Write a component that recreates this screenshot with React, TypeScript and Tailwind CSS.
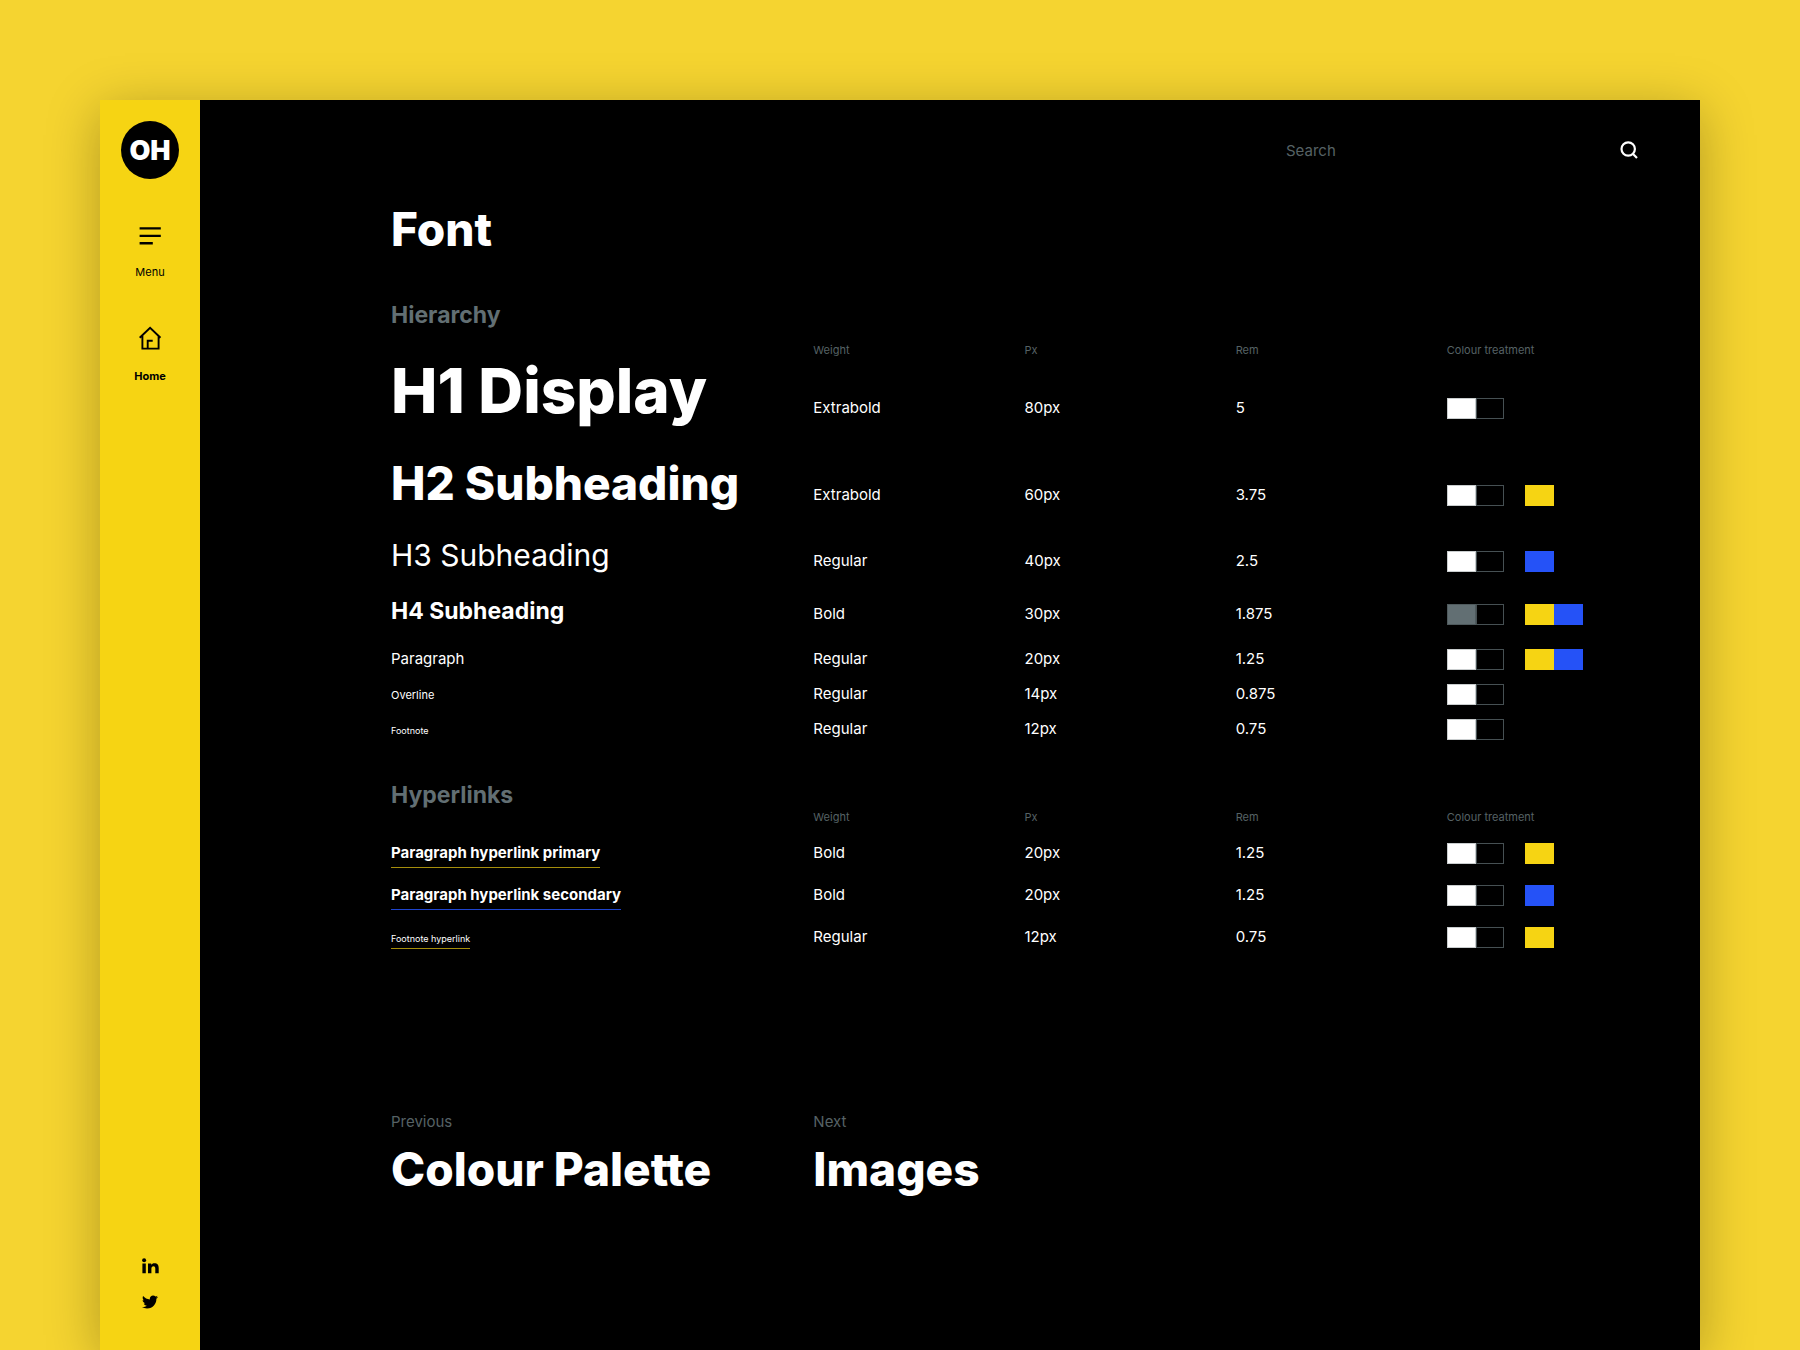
import { FaTwitter } from "react-icons/fa";
import type { ReactNode } from "react";

type Swatch = "white" | "black" | "grey" | "yellow" | "blue";

interface Row {
  sample: ReactNode;
  weight: string;
  px: string;
  rem: string;
  base: Swatch[];
  accent: Swatch[];
  height: string;
}

const swatchClass: Record<Swatch, string> = {
  white: "w-[29px] border border-[#c9cdce] bg-white",
  grey: "w-[29px] border border-[#4f5a5d] bg-[#626f73]",
  black: "w-7 border border-[#465053] bg-black",
  yellow: "w-[29px] bg-[#f6d413]",
  blue: "w-[29px] bg-[#2552f7]",
};

const hierarchy: Row[] = [
  {
    sample: <span className="text-[62px] leading-[64px] font-extrabold">H1 Display</span>,
    weight: "Extrabold", px: "80px", rem: "5",
    base: ["white", "black"], accent: [], height: "h-24",
  },
  {
    sample: <span className="text-[46px] leading-[56px] font-extrabold">H2 Subheading</span>,
    weight: "Extrabold", px: "60px", rem: "3.75",
    base: ["white", "black"], accent: ["yellow"], height: "h-[82px]",
  },
  {
    sample: <span className="text-[30px] leading-9">H3 Subheading</span>,
    weight: "Regular", px: "40px", rem: "2.5",
    base: ["white", "black"], accent: ["blue"], height: "h-[60px]",
  },
  {
    sample: <span className="text-[23px] leading-7 font-bold">H4 Subheading</span>,
    weight: "Bold", px: "30px", rem: "1.875",
    base: ["grey", "black"], accent: ["yellow", "blue"], height: "h-[50px]",
  },
  {
    sample: "Paragraph",
    weight: "Regular", px: "20px", rem: "1.25",
    base: ["white", "black"], accent: ["yellow", "blue"], height: "h-[35px]",
  },
  {
    sample: <span className="text-[11px]">Overline</span>,
    weight: "Regular", px: "14px", rem: "0.875",
    base: ["white", "black"], accent: [], height: "h-[35px]",
  },
  {
    sample: <span className="text-[9px]">Footnote</span>,
    weight: "Regular", px: "12px", rem: "0.75",
    base: ["white", "black"], accent: [], height: "h-[35px]",
  },
];

const hyperlinks: Row[] = [
  {
    sample: <a href="#primary" className="border-b border-[#a58e0c] pb-[5px] font-bold">Paragraph hyperlink primary</a>,
    weight: "Bold", px: "20px", rem: "1.25",
    base: ["white", "black"], accent: ["yellow"], height: "h-[42px]",
  },
  {
    sample: <a href="#secondary" className="border-b border-[#1f45cf] pb-[5px] font-bold">Paragraph hyperlink secondary</a>,
    weight: "Bold", px: "20px", rem: "1.25",
    base: ["white", "black"], accent: ["blue"], height: "h-[42px]",
  },
  {
    sample: <a href="#footnote" className="border-b border-[#a58e0c] pb-1 text-[9px]">Footnote hyperlink</a>,
    weight: "Regular", px: "12px", rem: "0.75",
    base: ["white", "black"], accent: ["yellow"], height: "h-[42px]",
  },
];

function Swatches({ colours }: { colours: Swatch[] }) {
  return (
    <span className="flex">
      {colours.map((c) => (
        <span key={c} className={`h-[21px] ${swatchClass[c]}`} />
      ))}
    </span>
  );
}

function SpecTable({ rows, labelledBy, headHeight }: { rows: Row[]; labelledBy: string; headHeight: string }) {
  return (
    <table aria-labelledby={labelledBy} className="w-full table-fixed text-left text-[15px] leading-6 whitespace-nowrap">
      <thead>
        <tr className={`align-top text-[11px] leading-4 text-[#566265] ${headHeight}`}>
          <td className="w-1/3" />
          <th scope="col" className="w-1/6 font-normal">Weight</th>
          <th scope="col" className="w-1/6 font-normal">Px</th>
          <th scope="col" className="w-1/6 font-normal">Rem</th>
          <th scope="col" className="w-1/6 font-normal">Colour treatment</th>
        </tr>
      </thead>
      <tbody>
        {rows.map((r, i) => (
          <tr key={i} className={`align-baseline ${r.height}`}>
            <th scope="row" className="font-normal">{r.sample}</th>
            <td>{r.weight}</td>
            <td>{r.px}</td>
            <td>{r.rem}</td>
            <td>
              <span className="inline-flex gap-[21px] align-middle">
                <Swatches colours={r.base} />
                <Swatches colours={r.accent} />
              </span>
            </td>
          </tr>
        ))}
      </tbody>
    </table>
  );
}

function Sidebar() {
  return (
    <aside className="flex w-[100px] shrink-0 flex-col items-center bg-[#f6d413] pt-[21px] pb-10 text-black">
      <a href="#top" className="flex size-[58px] items-center justify-center rounded-full bg-black text-[27px] leading-none font-black text-white">
        OH
      </a>
      <nav className="mt-12 flex flex-col items-center text-[11px] leading-4">
        <button type="button" className="flex flex-col items-center">
          <svg width="22" height="18" viewBox="0 0 22 18" fill="none" stroke="currentColor" strokeWidth="2.4" aria-hidden="true">
            <path d="M.6 1.4h21.2M.6 8.9h21.2M.6 16.2h13.2" />
          </svg>
          <span className="mt-[19px]">Menu</span>
        </button>
        <a href="#home" className="mt-[46px] flex flex-col items-center font-bold">
          <svg width="24" height="24" viewBox="0 0 24 24" fill="none" stroke="currentColor" strokeWidth="1.9" aria-hidden="true">
            <path d="M1.7 11.7 12.1 1.7l10.4 10M4.4 9.4v13.2h16.2V9.4M9.7 22.6v-7.9h5" />
          </svg>
          <span className="mt-[18px]">Home</span>
        </a>
      </nav>
      <div className="mt-auto flex flex-col items-center gap-5">
        <a href="#linkedin" aria-label="LinkedIn">
          <svg width="17" height="16" viewBox="0 0 17 16" fill="currentColor" aria-hidden="true">
            <circle cx="2.1" cy="2.3" r="2" />
            <path d="M.4 5.5h3.4v9.8H.4zM6 5.5h3.2v1.3c.6-1 1.700-1.600 3.200-1.600 3.200 0 4.300 1.900 4.300 4.700v5.400h-3.400v-4.800c0-1.300-.4-2.300-1.800-2.300-1.500 0-2.100 1.100-2.100 2.400v4.700H6z" />
          </svg>
        </a>
        <a href="#twitter" aria-label="Twitter"><FaTwitter size={16} /></a>
      </div>
    </aside>
  );
}

export default function App() {
  return (
    <div className="flex min-h-screen bg-[#f5d430] px-[100px] pt-[100px] font-['Inter',sans-serif] text-white">
      <div className="flex flex-1 bg-black shadow-[0_10px_50px_rgba(0,0,0,0.28)]">
        <Sidebar />
        <main className="min-w-0 flex-1 pr-[42px] pl-[191px]">
          <form role="search" className="flex h-[100px] items-center justify-end pr-5">
            <input
              type="search"
              aria-label="Search"
              placeholder="Search"
              className="w-[314px] bg-transparent pt-0.5 text-[15px] leading-6 outline-none placeholder:text-[#566265] placeholder:opacity-100"
            />
            <button type="submit" aria-label="Submit search" className="ml-5">
              <svg width="18" height="18" viewBox="0 0 18 18" fill="none" stroke="currentColor" strokeWidth="2.2" aria-hidden="true">
                <circle cx="8.2" cy="8" r="6.7" />
                <path d="m12.8 12.8 4.200 4.200" />
              </svg>
            </button>
          </form>

          <h1 className="mt-px text-[46px] leading-[56px] font-extrabold">Font</h1>

          <section className="mt-11">
            <h2 id="hierarchy" className="mb-[13px] text-[23px] leading-7 font-bold text-[#626f73]">Hierarchy</h2>
            <SpecTable rows={hierarchy} labelledBy="hierarchy" headHeight="h-[17px]" />
          </section>

          <section className="mt-[29px]">
            <h2 id="hyperlinks" className="text-[23px] leading-7 font-bold text-[#626f73]">Hyperlinks</h2>
            <SpecTable rows={hyperlinks} labelledBy="hyperlinks" headHeight="h-8" />
          </section>

          <nav aria-label="Pages" className="mt-[143px] grid grid-cols-3 whitespace-nowrap">
            <a href="#colour-palette">
              <span className="block text-[15px] leading-6 text-[#566265]">Previous</span>
              <span className="mt-[7px] block text-[46px] leading-[56px] font-extrabold">Colour Palette</span>
            </a>
            <a href="#images">
              <span className="block text-[15px] leading-6 text-[#566265]">Next</span>
              <span className="mt-[7px] block text-[46px] leading-[56px] font-extrabold">Images</span>
            </a>
          </nav>
        </main>
      </div>
    </div>
  );
}
